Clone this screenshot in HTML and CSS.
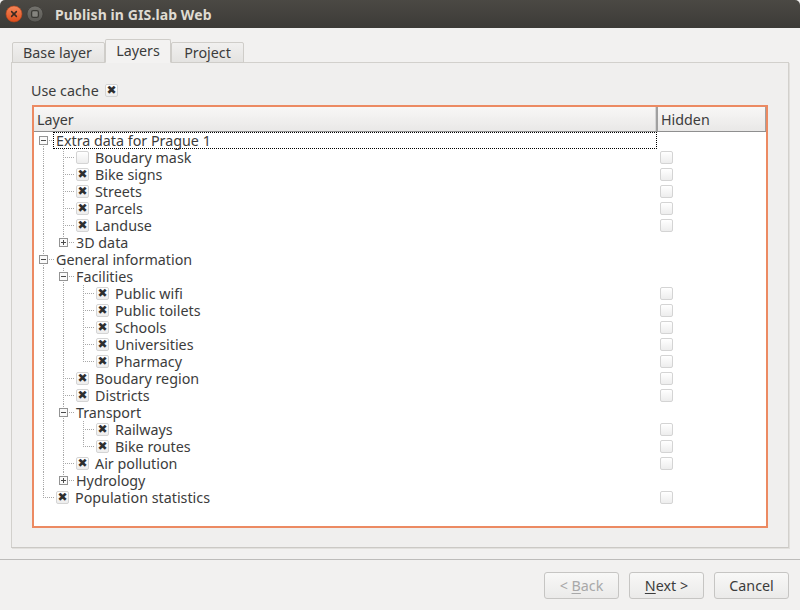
FILE: index.html
```html
<!DOCTYPE html>
<html>
<head>
<meta charset="utf-8">
<link rel="stylesheet" href="styles.css">
</head>
<body>
<div class="window">
  <div class="titlebar">
    <svg class="wbtn" width="18" height="18" viewBox="0 0 18 18">
      <defs>
        <linearGradient id="cg" x1="0" y1="0" x2="0" y2="1">
          <stop offset="0" stop-color="#f4875a"/>
          <stop offset="1" stop-color="#df4d1b"/>
        </linearGradient>
        <linearGradient id="mg" x1="0" y1="0" x2="0" y2="1">
          <stop offset="0" stop-color="#74736e"/>
          <stop offset="1" stop-color="#5a5955"/>
        </linearGradient>
      </defs>
      <circle cx="9" cy="9" r="8" fill="url(#cg)" stroke="#b8431a" stroke-width="0.6"/>
      <path d="M6.6 6.6 L11.4 11.4 M11.4 6.6 L6.6 11.4" stroke="#3b2a22" stroke-width="1.5" stroke-linecap="round"/>
    </svg>
    <svg class="wbtn" width="18" height="18" viewBox="0 0 18 18">
      <circle cx="9" cy="9" r="8" fill="url(#mg)" stroke="#34332f" stroke-width="0.6"/>
      <rect x="5.6" y="5.6" width="6.8" height="6.8" rx="1.6" fill="#85847f" stroke="#3a3935" stroke-width="1.3"/>
    </svg>
    <span class="title">Publish in GIS.lab Web</span>
  </div>

  <div class="content">
    <div class="tabs">
      <div class="tab tab-base">Base layer</div>
      <div class="tab tab-layers active">Layers</div>
      <div class="tab tab-project">Project</div>
    </div>
    <div class="panel">
      <div class="usecache"><span class="uc-label">Use cache</span><span class="cb on"></span></div>
      <div class="tree">
        <div class="thead">
          <div class="th th-layer">Layer</div>
          <div class="th th-hidden">Hidden</div>
        </div>
        <div class="tbody">
          <div class="row"><div class="lc"><i class="g f"><b class="exp minus"></b></i><span class="tx grp focus">Extra data for Prague 1</span></div><div class="hc"></div></div>
          <div class="row"><div class="lc"><i class="g v"></i><i class="g t"></i><span class="cb"></span><span class="tx">Boudary mask</span></div><div class="hc"><span class="cb"></span></div></div>
          <div class="row"><div class="lc"><i class="g v"></i><i class="g t"></i><span class="cb on"></span><span class="tx">Bike signs</span></div><div class="hc"><span class="cb"></span></div></div>
          <div class="row"><div class="lc"><i class="g v"></i><i class="g t"></i><span class="cb on"></span><span class="tx">Streets</span></div><div class="hc"><span class="cb"></span></div></div>
          <div class="row"><div class="lc"><i class="g v"></i><i class="g t"></i><span class="cb on"></span><span class="tx">Parcels</span></div><div class="hc"><span class="cb"></span></div></div>
          <div class="row"><div class="lc"><i class="g v"></i><i class="g t"></i><span class="cb on"></span><span class="tx">Landuse</span></div><div class="hc"><span class="cb"></span></div></div>
          <div class="row"><div class="lc"><i class="g v"></i><i class="g l"><b class="exp plus"></b></i><span class="tx grp">3D data</span></div><div class="hc"></div></div>
          <div class="row"><div class="lc"><i class="g t"><b class="exp minus"></b></i><span class="tx grp">General information</span></div><div class="hc"></div></div>
          <div class="row"><div class="lc"><i class="g v"></i><i class="g t"><b class="exp minus"></b></i><span class="tx grp">Facilities</span></div><div class="hc"></div></div>
          <div class="row"><div class="lc"><i class="g v"></i><i class="g v"></i><i class="g t"></i><span class="cb on"></span><span class="tx">Public wifi</span></div><div class="hc"><span class="cb"></span></div></div>
          <div class="row"><div class="lc"><i class="g v"></i><i class="g v"></i><i class="g t"></i><span class="cb on"></span><span class="tx">Public toilets</span></div><div class="hc"><span class="cb"></span></div></div>
          <div class="row"><div class="lc"><i class="g v"></i><i class="g v"></i><i class="g t"></i><span class="cb on"></span><span class="tx">Schools</span></div><div class="hc"><span class="cb"></span></div></div>
          <div class="row"><div class="lc"><i class="g v"></i><i class="g v"></i><i class="g t"></i><span class="cb on"></span><span class="tx">Universities</span></div><div class="hc"><span class="cb"></span></div></div>
          <div class="row"><div class="lc"><i class="g v"></i><i class="g v"></i><i class="g l"></i><span class="cb on"></span><span class="tx">Pharmacy</span></div><div class="hc"><span class="cb"></span></div></div>
          <div class="row"><div class="lc"><i class="g v"></i><i class="g t"></i><span class="cb on"></span><span class="tx">Boudary region</span></div><div class="hc"><span class="cb"></span></div></div>
          <div class="row"><div class="lc"><i class="g v"></i><i class="g t"></i><span class="cb on"></span><span class="tx">Districts</span></div><div class="hc"><span class="cb"></span></div></div>
          <div class="row"><div class="lc"><i class="g v"></i><i class="g t"><b class="exp minus"></b></i><span class="tx grp">Transport</span></div><div class="hc"></div></div>
          <div class="row"><div class="lc"><i class="g v"></i><i class="g v"></i><i class="g t"></i><span class="cb on"></span><span class="tx">Railways</span></div><div class="hc"><span class="cb"></span></div></div>
          <div class="row"><div class="lc"><i class="g v"></i><i class="g v"></i><i class="g l"></i><span class="cb on"></span><span class="tx">Bike routes</span></div><div class="hc"><span class="cb"></span></div></div>
          <div class="row"><div class="lc"><i class="g v"></i><i class="g t"></i><span class="cb on"></span><span class="tx">Air pollution</span></div><div class="hc"><span class="cb"></span></div></div>
          <div class="row"><div class="lc"><i class="g v"></i><i class="g l"><b class="exp plus"></b></i><span class="tx grp">Hydrology</span></div><div class="hc"></div></div>
          <div class="row"><div class="lc"><i class="g l"></i><span class="cb on"></span><span class="tx">Population statistics</span></div><div class="hc"><span class="cb"></span></div></div>
        </div>
      </div>
    </div>
  </div>

  <div class="footer">
    <button class="btn disabled">&lt; <u>B</u>ack</button>
    <button class="btn"><u>N</u>ext &gt;</button>
    <button class="btn">Cancel</button>
  </div>
</div>
</body>
</html>
```

FILE: styles.css
```css
* { box-sizing: border-box; }
html, body { margin: 0; padding: 0; background: #f2f1f0; }
body {
  font-family: "Noto Sans", "DejaVu Sans", sans-serif;
  font-size: 14.3px;
  color: #3c3c3c;
}
.window { width: 800px; height: 610px; display: flex; flex-direction: column; background: #f2f1f0; }

/* title bar */
.titlebar {
  height: 28px;
  flex: none;
  display: flex;
  align-items: center;
  padding-left: 5px;
  background: linear-gradient(#4b4944, #3c3b37);
  border-radius: 5px 5px 0 0;
}
.wbtn { display: block; margin-right: 3px; }
.title {
  margin-left: 8px;
  color: #dfdbd2;
  font-weight: bold;
  font-size: 14px;
  letter-spacing: 0.1px;
}

/* content */
.content { padding: 11px 11px 0 11px; flex: none; }
.tabs {
  display: flex;
  align-items: flex-end;
  height: 24px;
  padding-left: 1px;
  margin-bottom: -1px;
  position: relative;
  z-index: 1;
}
.tab {
  height: 21px;
  border: 1px solid #cfcdc9;
  border-radius: 2px 2px 0 0;
  background: linear-gradient(#f1f0ef, #e4e3e1);
  text-align: center;
  line-height: 19px;
  color: #3c3c3c;
}
.tab-base { width: 93px; padding-right: 2px; }
.tab-layers { width: 66px; }
.tab-project { width: 73px; }
.tab.active {
  height: 24px;
  background: #f3f2f1;
  border-bottom-color: #f3f2f1;
  line-height: 22px;
}
.panel {
  height: 486px;
  border: 1px solid #d2d0cc;
  border-bottom-color: #cbc9c5;
  background: #f0efee;
  padding: 17px 20px 19px 20px;
  box-shadow: 1px 1px 0 #e2e0dd;
}
.usecache {
  height: 20px;
  display: flex;
  align-items: center;
  margin-left: -1px;
}
.uc-label { width: 74px; }

/* tree */
.tree {
  margin-top: 5px;
  height: 423px;
  border: 2px solid #ec8a62;
  background: #fff;
}
.thead {
  display: flex;
  height: 25px;
  border-bottom: 1px solid #8f8f8f;
  background: linear-gradient(#f8f7f6, #e9e8e7);
}
.th { line-height: 26px; padding-left: 3px; }
.th-layer { width: 624px; border-right: 2px solid #a0a0a0; box-shadow: inset -1px 0 0 #d6d6d6; }
.th-hidden { flex: 1; border-right: 1px solid #a0a0a0; }

.row { display: flex; height: 17px; }
.lc { width: 624px; display: flex; align-items: center; height: 17px; }
.hc { flex: 1; display: flex; align-items: center; padding-left: 2px; }
.tx { line-height: 17px; white-space: nowrap; }
.tx.grp { padding-left: 2px; }
.tx.focus {
  flex: 1;
  height: 17px;
  line-height: 15px;
  border: 1px dotted #000;
  margin-left: -1px;
  margin-right: 1px;
  padding-left: 2px;
}

/* branch guides */
.g {
  --vl: repeating-linear-gradient(to bottom, #a8a8a8 0 1px, transparent 1px 2px);
  --hl: repeating-linear-gradient(to right, #a8a8a8 0 1px, transparent 1px 2px);
  display: block;
  flex: none;
  width: 20px;
  height: 17px;
  background-repeat: no-repeat;
}
.g.v { background-image: var(--vl); background-size: 1px 17px; background-position: 9px 0; }
.g.t {
  background-image: var(--vl), var(--hl);
  background-size: 1px 17px, 11px 1px;
  background-position: 9px 0, 9px 8px;
}
.g.l {
  background-image: var(--vl), var(--hl);
  background-size: 1px 9px, 11px 1px;
  background-position: 9px 0, 9px 8px;
}
.g.f {
  background-image: var(--vl), var(--hl);
  background-size: 1px 9px, 11px 1px;
  background-position: 9px 8px, 9px 8px;
}
.exp {
  display: block;
  width: 9px;
  height: 9px;
  margin: 4px 0 0 5px;
  border: 1px solid #939393;
  background-color: #fafafa;
  background-repeat: no-repeat;
}
.exp.minus { background-image: linear-gradient(#4a4a4a, #4a4a4a); background-size: 5px 1px; background-position: 1px 3px; }
.exp.plus {
  background-image: linear-gradient(#4a4a4a, #4a4a4a), linear-gradient(#4a4a4a, #4a4a4a);
  background-size: 5px 1px, 1px 5px;
  background-position: 1px 3px, 3px 1px;
}

/* checkboxes */
.cb {
  flex: none;
  display: inline-flex;
  align-items: center;
  justify-content: center;
  width: 13px;
  height: 13px;
  border: 1px solid #d4d4d4;
  border-radius: 2px;
  background: linear-gradient(#ffffff, #ededed);
  font-family: "DejaVu Sans", sans-serif;
  font-size: 12px;
  line-height: 11px;
  color: #2e2e2e;
  overflow: hidden;
}
.lc .cb { margin-left: 2px; margin-right: 6px; }
.cb.on::after { content: "\2716"; }

/* footer */
.footer {
  margin-top: 11px;
  flex: 1;
  border-top: 1px solid #bdbcba;
  display: flex;
  justify-content: flex-end;
  align-items: flex-start;
  gap: 10px;
  padding: 12px 11px 0 0;
}
.btn {
  width: 75px;
  height: 27px;
  font-family: inherit;
  font-size: 14.3px;
  color: #3c3c3c;
  border: 1px solid #c6c5c3;
  border-radius: 3px;
  background: linear-gradient(#f8f8f7, #ebeae9);
  padding: 0;
}
.btn u { text-decoration-thickness: 1px; text-underline-offset: 2px; }
.btn.disabled { color: #a8a8a8; }
```
